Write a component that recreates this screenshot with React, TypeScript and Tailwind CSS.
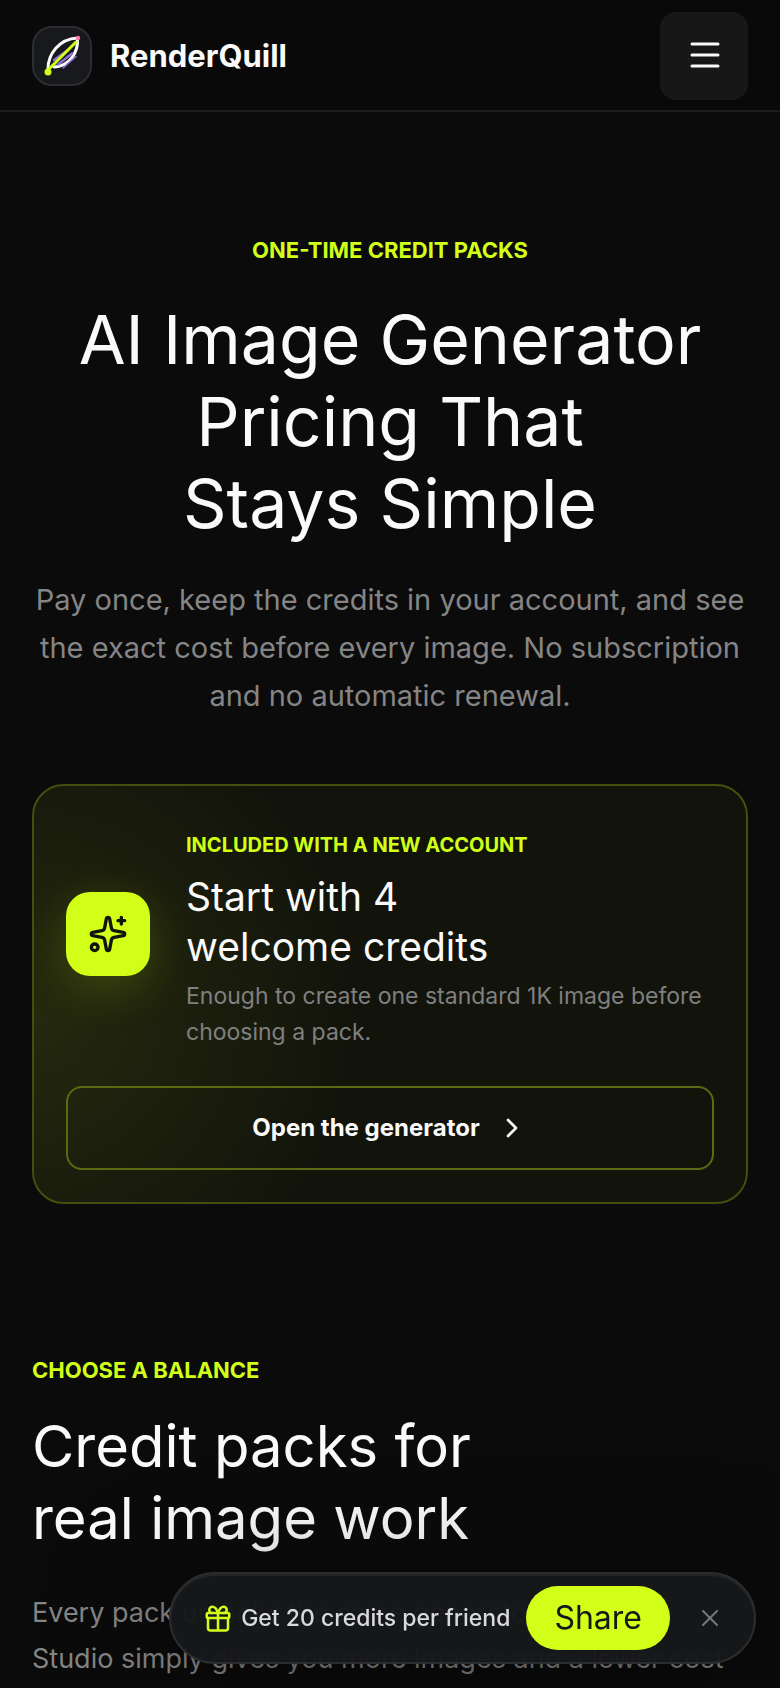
import { useState } from 'react'
import { ChevronRight, X } from 'lucide-react'

function QuillLogo() {
  return (
    <svg viewBox="0 0 60 60" fill="none" strokeLinecap="round" className="size-[60px] shrink-0" aria-hidden="true">
      <rect x="1" y="1" width="58" height="58" rx="19" fill="#18191d" stroke="#2c2d31" strokeWidth="2" />
      <path d="M16 43C16 28 27 13 45.5 12C46.5 26 38 40 22 41" stroke="#fafafa" strokeWidth="3" />
      <path d="M22 34L36 24M26 38.5L40 27.5" stroke="#8b6fd6" strokeWidth="2.5" />
      <path d="M31 42L44 30.5" stroke="#8b6fd6" strokeWidth="1.6" />
      <path d="M16 44L44 16" stroke="#d1ff17" strokeWidth="3" />
      <circle cx="16" cy="46" r="3.5" fill="#d1ff17" />
      <circle cx="46" cy="12" r="2.2" fill="#ff7aa8" />
    </svg>
  )
}

function SparkleIcon() {
  return (
    <svg viewBox="0 0 24 24" fill="none" stroke="currentColor" strokeWidth="2" strokeLinecap="round" strokeLinejoin="round" className="size-10" aria-hidden="true">
      <path d="M11.017 2.814a1 1 0 0 1 1.966 0l1.051 5.558a2 2 0 0 0 1.594 1.594l5.558 1.051a1 1 0 0 1 0 1.966l-5.558 1.051a2 2 0 0 0-1.594 1.594l-1.051 5.558a1 1 0 0 1-1.966 0l-1.051-5.558a2 2 0 0 0-1.594-1.594l-5.558-1.051a1 1 0 0 1 0-1.966l5.558-1.051a2 2 0 0 0 1.594-1.594z" />
      <path d="M20 2v4M22 4h-4" />
      <circle cx="4" cy="20" r="2" />
    </svg>
  )
}

function GiftIcon() {
  return (
    <svg viewBox="0 0 24 24" fill="none" stroke="currentColor" strokeWidth="2" strokeLinecap="round" strokeLinejoin="round" className="size-[30px] shrink-0 text-[#d1ff17]" aria-hidden="true">
      <rect x="3" y="8" width="18" height="4" rx="1" />
      <path d="M12 8v14M20 12v8a2 2 0 0 1-2 2H6a2 2 0 0 1-2-2v-8" />
      <path d="M7.5 8a2.5 2.5 0 0 1 0-5C9.500 3 11 5 12 8c1-3 2.500-5 4.500-5a2.500 2.500 0 0 1 0 5" />
    </svg>
  )
}

function SharePill() {
  const [open, setOpen] = useState(true)

  if (!open) return null

  return (
    <aside className="fixed right-6 bottom-6 flex h-[92px] items-center rounded-full border-2 border-[#2b2c2e] bg-[#17181a]/97 pr-3 pl-8 shadow-[inset_0_2px_0_#242527,0_24px_120px_rgba(0,0,0,0.5)]">
      <GiftIcon />
      <span className="ml-2 text-[23px] font-medium whitespace-nowrap text-[#d9dadc]">Get 20 credits per friend</span>
      <button className="ml-4 h-16 rounded-full bg-[#d1ff17] px-7 text-[32px] text-[#17181a]">Share</button>
      <button onClick={() => setOpen(false)} aria-label="Dismiss" className="ml-2 flex size-16 items-center justify-center text-[#74767b]">
        <X size={28} strokeWidth={1.75} />
      </button>
    </aside>
  )
}

export default function App() {
  return (
    <div className="min-h-screen bg-[#0b0b0b] font-['Inter',sans-serif] text-[#fafafa]">
      <header className="flex h-28 items-center justify-between border-b-2 border-[#1c1c1c] bg-[#090909] px-8 pt-0.5">
        <a href="#" className="flex items-center gap-[18px] text-[31px] font-bold">
          <QuillLogo />
          RenderQuill
        </a>
        <button aria-label="Open menu" className="flex size-[88px] items-center justify-center rounded-2xl bg-[#171717]">
          <svg viewBox="0 0 44 44" fill="none" stroke="currentColor" strokeWidth="3" strokeLinecap="round" className="size-11" aria-hidden="true">
            <path d="M10 10h26M10 21h26M10 32h26" />
          </svg>
        </button>
      </header>

      <main className="px-8 pt-[122px]">
        <section className="text-center">
          <p className="text-[22px] leading-8 font-bold text-[#d1ff17]">ONE-TIME CREDIT PACKS</p>
          <h1 className="mt-8 text-[68px] leading-[82px]">
            AI Image Generator
            <br />
            Pricing That
            <br />
            Stays Simple
          </h1>
          <p className="mt-8 text-[29px] leading-[48px] text-[#858585]">
            Pay once, keep the credits in your account, and see the exact cost before every image. No subscription and no automatic renewal.
          </p>
        </section>

        <section className="mt-16 rounded-[32px] border-2 border-[#444f0e] bg-[#12140b] bg-[radial-gradient(circle_at_0%_55%,#25290e_0%,#12140b_320px)] p-8">
          <div className="flex items-center gap-9">
            <div className="flex size-[84px] shrink-0 items-center justify-center rounded-3xl bg-[#d1ff17] text-[#12140b] shadow-[0_12px_48px_rgba(209,255,23,0.18)]">
              <SparkleIcon />
            </div>
            <div className="pt-3">
              <p className="text-xl leading-[30px] font-bold text-[#d1ff17]">INCLUDED WITH A NEW ACCOUNT</p>
              <h2 className="mt-3 text-[39px] leading-[50px]">
                Start with 4
                <br />
                welcome credits
              </h2>
              <p className="mt-1.5 text-[23px] leading-9 text-[#808080]">Enough to create one standard 1K image before choosing a pack.</p>
            </div>
          </div>
          <a href="#generator" className="mt-9 flex h-[84px] items-center justify-center gap-4 rounded-2xl border-2 border-[#5a6a10] text-2xl font-bold">
            Open the generator
            <ChevronRight size={32} />
          </a>
        </section>

        <section className="mt-[150px] pb-4">
          <p className="text-[22px] leading-8 font-bold text-[#d1ff17]">CHOOSE A BALANCE</p>
          <h2 className="mt-6 text-[58px] leading-[72px]">
            Credit packs for
            <br />
            real image work
          </h2>
          <p className="mt-9 text-[27px] leading-[46px] text-[#858585]">
            Every pack unlocks the same generator.
            <br />
            Studio simply gives you more images and a lower cost
          </p>
        </section>
      </main>

      <SharePill />
    </div>
  )
}
